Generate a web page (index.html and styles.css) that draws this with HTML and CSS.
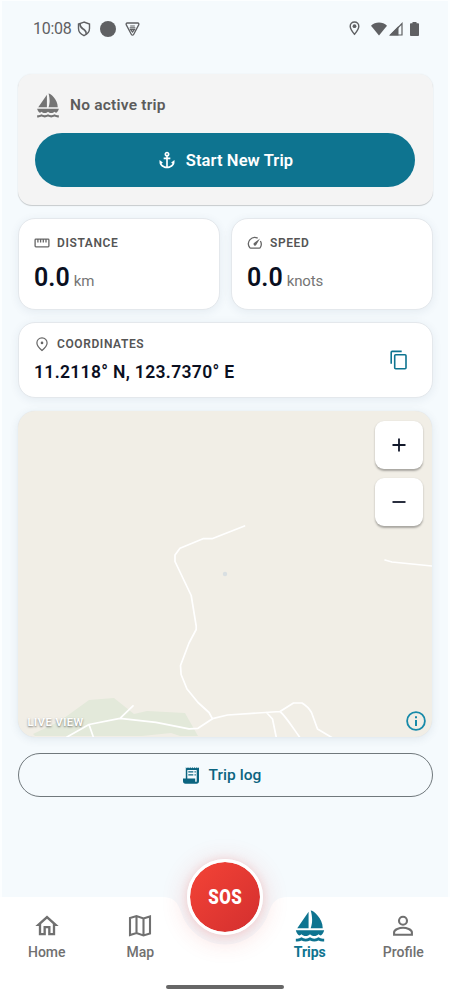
FILE: index.html
```html
<!DOCTYPE html>
<html lang="en">
<head>
<meta charset="utf-8">
<title>Trips</title>
<link rel="stylesheet" href="styles.css">
</head>
<body>
<div class="screen">
  <header class="status">
    <span class="clock">10:08</span>
    <svg class="st-shield" width="14" height="16" viewBox="0 0 14 16" fill="none" stroke="currentColor" stroke-width="1.4"><path d="M7 1.1 1.5 3v4.5c0 3.300 2.200 5.700 5.500 7.200 3.300-1.500 5.500-3.900 5.500-7.200V3z"/><path d="M3 2.800c-.3 4 2.300 4.500 4.500 6.200 1.400 1 1.800 2.500 1.800 4.200" stroke-width="1.600"/></svg>
    <span class="st-dot"></span>
    <svg class="st-tri" width="15" height="14" viewBox="0 0 15 14" fill="none" stroke="currentColor" stroke-width="1.300"><path d="M2.300 1h10.400c1 0 1.500 1 1 1.900L8.600 12.500c-.5.900-1.700.9-2.200 0L1.300 2.900C.8 2 1.300 1 2.300 1z"/><path d="M5.200 4h4.600M4.700 5.900h5.600M5.600 7.600h3.800L7.500 10z" stroke-width="1.200"/></svg>
    <span class="grow"></span>
    <svg class="st-pin" width="11" height="15" viewBox="0 0 11 15"><path d="M5.500 1C3 1 1.200 2.900 1.200 5.300c0 3 4.300 8 4.300 8s4.300-5 4.300-8C9.800 2.900 8 1 5.500 1z" fill="none" stroke="currentColor" stroke-width="1.400"/><circle cx="5.500" cy="5.200" r="1.900" fill="currentColor"/></svg>
    <svg class="st-wifi" width="16" height="14" viewBox="0 0 16 14" fill="currentColor"><path d="M8 13.500 0 3.800C2.200 1.500 5 .5 8 .5s5.800 1 8 3.300z"/></svg>
    <svg class="st-cell" width="14" height="14" viewBox="0 0 14 14"><path d="M13 1.500V13H2z" fill="none" stroke="currentColor" stroke-width="1.200"/><path d="M0 13.600 9.500 4v9.600z" fill="currentColor"/></svg>
    <svg class="st-batt" width="9" height="14" viewBox="0 0 9 14" fill="currentColor"><path d="M2.500 1.300V0h4v1.300h1.700c.5 0 .8.300.8.800v11c0 .5-.3.900-.8.900H.8c-.5 0-.8-.4-.8-.9v-11c0-.5.300-.8.800-.8z"/></svg>
  </header>

  <main class="content">
    <section class="active-trip">
      <div class="trip-state">
        <svg width="26" height="27" viewBox="0 0 24 24" fill="currentColor"><path d="M11 13.500V2L3 13.500h8zm10 0C21 6.500 14.500 1 12.500 1c0 0 1 3 1 6.500s-1 6-1 6H21zM22 15H2c.31 1.530 1.160 2.840 2.330 3.730.65-.2 1.220-.5 1.670-.98.73.76 1.820 1.250 3 1.250s2.270-.49 3-1.250c.73.76 1.820 1.250 3 1.250s2.270-.49 3-1.250c.45.48 1.020.78 1.670.98C20.840 17.840 21.690 16.530 22 15zm0 8v-2h-1c-1.040 0-2.080-.35-3-1-1.830 1.300-4.170 1.300-6 0-1.830 1.300-4.170 1.300-6 0-.91.65-1.960 1-3 1H2v2h1c1.030 0 2.050-.25 3-.75 1.890 1 4.110 1 6 0 1.890 1 4.110 1 6 0 .95.5 1.970.75 3 .75h1z"/></svg>
        <span>No active trip</span>
      </div>
      <button class="start">
        <svg width="20" height="20" viewBox="0 0 24 24" fill="currentColor"><path d="M17 15l1.550 1.550c-.96 1.690-3.330 3.040-5.550 3.370V11h3V9h-3V7.820C14.160 7.400 15 6.300 15 5c0-1.650-1.350-3-3-3S9 3.350 9 5c0 1.300.84 2.400 2 2.820V9H8v2h3v8.920c-2.220-.33-4.590-1.680-5.550-3.370L7 15l-4-3v3c0 3.880 4.920 7 9 7s9-3.120 9-7v-3l-4 3zM12 4c.55 0 1 .45 1 1s-.45 1-1 1-1-.45-1-1 .45-1 1-1z"/></svg>
        <span>Start New Trip</span>
      </button>
    </section>

    <div class="stats">
      <section class="card stat">
        <div class="label">
          <svg width="16" height="16" viewBox="0 0 16 16" fill="none" stroke="currentColor" stroke-width="1.300"><rect x="1.100" y="4.100" width="13.800" height="7.800" rx=".8"/><path d="M3.900 4v3.500M6.600 4v3.500M9.300 4v3.500M12 4v3.500"/></svg>
          <span>DISTANCE</span>
        </div>
        <div class="value"><b>0.0</b><span>km</span></div>
      </section>
      <section class="card stat">
        <div class="label">
          <svg width="16" height="16" viewBox="0 0 16 16" fill="none" stroke="currentColor" stroke-width="1.300"><path d="M10.700 3.200A6.300 6.300 0 0 0 2.700 12.500c.2.400.5.600.9.600h8.800c.4 0 .7-.2.900-.6A6.300 6.300 0 0 0 13.400 6"/><path d="M13 3.600 9.200 10.100A1.500 1.500 0 1 1 7 8z" fill="currentColor" stroke="none"/></svg>
          <span>SPEED</span>
        </div>
        <div class="value"><b>0.0</b><span>knots</span></div>
      </section>
    </div>

    <section class="card coords">
      <div>
        <div class="label">
          <svg width="16" height="16" viewBox="0 0 16 16" fill="none" stroke="currentColor" stroke-width="1.200"><path d="M8 1.800C5 1.800 2.900 4.100 2.900 6.900c0 2.700 2.300 5.100 5.100 7.600 2.800-2.500 5.100-4.900 5.100-7.600C13.100 4.100 11 1.800 8 1.800z"/><circle cx="8" cy="6.900" r="1.300" fill="currentColor" stroke="none"/></svg>
          <span>COORDINATES</span>
        </div>
        <div class="position">11.2118° N, 123.7370° E</div>
      </div>
      <svg class="copy" width="17" height="20" viewBox="0 0 17 20" fill="none" stroke="currentColor" stroke-width="1.600"><path d="M1.200 13.700V2.400c0-.6.400-1 1-1h9.500"/><rect x="4.700" y="4.700" width="11.300" height="14" rx="1"/></svg>
    </section>

    <section class="map">
      <svg class="terrain" width="414" height="326" viewBox="18 411 414 326" fill="none" stroke="#fff" stroke-width="1.700" stroke-linejoin="round" stroke-linecap="round">
        <path d="M33 734 60 721 89 700 114 698 134 714 147 711 185 713 198 736 180 736 171 733 142 736 35 736z" fill="#e3e9da" stroke="none"/>
        <path d="M244.500 526 212 538.700h-9l-23 9.500-5 6.800v6.500l16.200 34 5 30.500v3.500L189 643l-8.500 22.500.6 9 5.900 14.500 11 13.500 11 10 3.300 6"/>
        <path d="M67 737 89 724.500l31-6.200 36 4 33 6.500 9-.5 14.500-9.600 15-3.700 52.500-3.500 13.500-8.500h8.500c5 3 7 5 9.500 9.500l6 16.500 16 9.500M120 718.300l13-12.500M89 724.500l4.500 13M266.500 712.500l6 6.500 3.700 18M280 711.500c5 4 10 12 19.500 25.500M385 560l7 2 40 4"/>
        <circle cx="225" cy="574" r="2.200" fill="#d9dfe2" stroke="none"/>
      </svg>
      <div class="zoom">
        <button><svg width="14" height="14" viewBox="0 0 14 14" stroke="currentColor" stroke-width="1.800"><path d="M.5 7h13M7 .5v13"/></svg></button>
        <button><svg width="14" height="14" viewBox="0 0 14 14" stroke="currentColor" stroke-width="1.800"><path d="M.5 7h13"/></svg></button>
      </div>
      <span class="live">LIVE VIEW</span>
      <svg class="info" width="20" height="20" viewBox="0 0 20 20"><circle cx="10" cy="10" r="8.900" fill="none" stroke="currentColor" stroke-width="1.800"/><path d="M9 9h2v6H9zM9 5.300h2v2H9z" fill="currentColor"/></svg>
    </section>

    <button class="log">
      <svg width="16" height="17" viewBox="0 0 16 17" fill="currentColor"><path fill-rule="evenodd" d="M2.800.2l1.100 1L5 .2l1.100 1 1.100-1 1.100 1 1.100-1 1.100 1 1.100-1 1.100 1 1.100-1 1.100 1 1.100-1V14c0 1.700-.9 2.800-2.500 2.800H2.500C.9 16.800 0 15.700 0 14v-2.400h2.800zM4.300 3v8.600h7.900V14c0 1.200 1.500 1.200 1.500 0V3zM5.300 4.200h5v1.400h-5zm6.200 0h1.300v1.400h-1.300zm-6.200 3h5v1.400h-5zm6.200 0h1.300v1.400h-1.300z"/></svg>
      <span>Trip log</span>
    </button>
  </main>

  <nav class="tabs">
    <svg class="tabs-bg" width="450" height="103" viewBox="0 0 450 103"><path d="M0 0H162C173 0 178 5 181 15A46 46 0 0 0 269 15C272 5 277 0 288 0H450V103H0z" fill="#fff"/></svg>
    <a class="tab">
      <svg width="28" height="28" viewBox="0 0 24 24" fill="currentColor"><path d="M12 5.690l5 4.500V18h-2v-6H9v6H7v-7.810l5-4.500M12 3L2 12h3v8h6v-6h2v6h6v-8h3L12 3z"/></svg>
      <span>Home</span>
    </a>
    <a class="tab">
      <svg width="28" height="28" viewBox="0 0 28 28" fill="none" stroke="currentColor" stroke-width="2.100"><path d="M4 6v17l6.500-2 7 2.500 6.500-2v-17l-6.500 2-7-2.500zM10.500 4v17M17.500 6.500v17"/></svg>
      <span>Map</span>
    </a>
    <div class="sos-slot"><button class="sos"><span>SOS</span></button></div>
    <a class="tab current">
      <svg width="34" height="34" viewBox="0 0 24 24" fill="currentColor"><path d="M11 13.500V2L3 13.500h8zm10 0C21 6.500 14.500 1 12.500 1c0 0 1 3 1 6.500s-1 6-1 6H21zM22 15H2c.31 1.530 1.160 2.840 2.330 3.730.65-.2 1.220-.5 1.670-.98.73.76 1.820 1.250 3 1.250s2.270-.49 3-1.250c.73.76 1.820 1.250 3 1.250s2.270-.49 3-1.250c.45.48 1.020.78 1.670.98C20.840 17.840 21.690 16.530 22 15zm0 8v-2h-1c-1.040 0-2.080-.35-3-1-1.830 1.300-4.170 1.300-6 0-1.830 1.300-4.170 1.300-6 0-.91.65-1.960 1-3 1H2v2h1c1.030 0 2.050-.25 3-.75 1.890 1 4.110 1 6 0 1.890 1 4.110 1 6 0 .95.5 1.970.75 3 .75h1z"/></svg>
      <span>Trips</span>
    </a>
    <a class="tab">
      <svg width="28" height="28" viewBox="0 0 28 28" fill="none" stroke="currentColor" stroke-width="2.100"><circle cx="14" cy="8.700" r="4"/><path d="M5.100 22.700v-2.400c0-3 5.500-4.500 8.900-4.500s8.900 1.500 8.900 4.500v2.400z"/></svg>
      <span>Profile</span>
    </a>
    <span class="gesture"></span>
  </nav>
</div>
</body>
</html>
```
FILE: styles.css
```css
* { box-sizing: border-box; }
body { margin: 0; background: #fff; font-family: Roboto, "Liberation Sans", sans-serif; }
button { border: 0; margin: 0; padding: 0; font: inherit; display: flex; align-items: center; justify-content: center; }
svg { display: block; flex: none; }

.screen {
  width: 450px;
  height: 1000px;
  display: flex;
  flex-direction: column;
  overflow: hidden;
  background: linear-gradient(#f5fafd, #f5fafd) 2px 1px / 446px 999px no-repeat #fcfeff;
}

.status { height: 57px; padding: 0 31px 0 33px; display: flex; align-items: center; color: #5f6063; }
.clock { font-size: 16px; letter-spacing: -.25px; line-height: 20px; }
.st-shield { margin-left: 5px; }
.st-dot { width: 16px; height: 16px; border-radius: 50%; background: #5f6063; margin-left: 9px; }
.st-tri { margin-left: 9px; }
.grow { flex: 1; }
.st-wifi { margin-left: 11px; }
.st-cell { margin-left: 2px; }
.st-batt { margin-left: 7px; }

.content { flex: 1; padding: 17px 17.500px 0; display: flex; flex-direction: column; }

.active-trip {
  height: 130.500px;
  padding: 17.500px 17px 0 17.500px;
  border-radius: 14px;
  background: #f4f4f4;
  box-shadow: 0 1px 1px rgba(0, 0, 0, .18), 0 0 2px rgba(0, 0, 0, .06);
}
.trip-state { display: flex; align-items: center; gap: 9px; height: 27px; color: #747474; }
.trip-state span { color: #5c5c5c; font-size: 15.500px; font-weight: 600; letter-spacing: .22px; }
.start {
  width: 380px;
  height: 54px;
  margin-top: 14.500px;
  gap: 9px;
  border-radius: 27px;
  background: #0e7490;
  color: #fff;
  font-size: 16.500px;
  font-weight: 600;
  letter-spacing: .1px;
}

.card {
  background: #fff;
  border: 1px solid #e4e8ec;
  border-radius: 17px;
  box-shadow: 0 2px 10px rgba(40, 70, 100, .08);
}
.stats { display: grid; grid-template-columns: 1fr 1fr; gap: 11px; margin-top: 13.500px; }
.stat { height: 92px; padding: 16px 15.500px 0; }
.label { display: flex; align-items: center; gap: 7px; height: 16px; color: #666; }
.label span { color: #555; font-size: 12px; font-weight: 600; letter-spacing: .6px; }
.value { display: flex; align-items: baseline; gap: 4px; margin-top: 12px; line-height: 30px; }
.value b { color: #0a0f1f; font-size: 25px; font-weight: 600; letter-spacing: 0; }
.value span { color: #757575; font-size: 15px; letter-spacing: -.1px; }

.coords { height: 76px; margin-top: 12px; padding: 13px 25px 0 15.500px; display: flex; justify-content: space-between; }
.position { margin-top: 9px; line-height: 22px; color: #0a0f1f; font-size: 17.500px; font-weight: 600; letter-spacing: .33px; }
.copy { margin-top: 14px; color: #0e7490; }

.map {
  position: relative;
  height: 326px;
  margin: 13px 0 0 .5px;
  width: 414px;
  border-radius: 17px;
  background: #f1eee6;
  box-shadow: 0 2px 10px rgba(40, 70, 100, .1), 0 0 1px #dfe5ea;
}
.terrain { border-radius: 17px; }
.zoom { position: absolute; top: 10px; right: 9.500px; display: grid; gap: 9px; }
.zoom button { width: 48px; height: 48px; border-radius: 9px; background: #fff; color: #12182a; box-shadow: 0 1.500px 2px rgba(0, 0, 0, .3); }
.live { position: absolute; left: 9.500px; bottom: 6px; color: #fff; font-size: 11px; line-height: 16px; font-weight: 600; letter-spacing: .55px; text-shadow: 0 1px 2px rgba(0, 0, 0, .5); }
.info { position: absolute; right: 6.500px; bottom: 6px; color: #178aa9; }

.log {
  height: 44px;
  margin-top: 16px;
  padding-right: 6px;
  gap: 10px;
  border: 1px solid #70787c;
  border-radius: 22px;
  background: transparent;
  color: #0b6480;
  font-size: 15.500px;
  font-weight: 500;
  letter-spacing: .05px;
}

.tabs { position: relative; height: 103px; display: flex; }
.tabs-bg { position: absolute; left: 0; top: 0; }
.tab { position: relative; flex: 1; padding-top: 12px; display: flex; flex-direction: column; align-items: center; color: #707070; font-size: 14px; font-weight: 500; }
.tab svg { height: 34px; }
.tab span { line-height: 18px; }
.current { color: #0e7490; font-weight: 700; }
.sos-slot { position: relative; width: 76px; }
.sos {
  width: 76px;
  height: 76px;
  margin-top: -38px;
  border: 3px solid #fff;
  border-radius: 50%;
  background: linear-gradient(135deg, #f44336, #d32f2f) padding-box;
  box-shadow: 0 0 8px rgba(229, 57, 53, .12), 0 4px 26px rgba(229, 57, 53, .22);
  color: #fff;
  font-size: 21px;
  font-weight: 900;
}
.sos span { transform: scaleX(.8); letter-spacing: .6px; margin-right: -.6px; }
.gesture { position: absolute; left: 166px; bottom: 11px; width: 118px; height: 4px; border-radius: 2px; background: #676767; }
```
